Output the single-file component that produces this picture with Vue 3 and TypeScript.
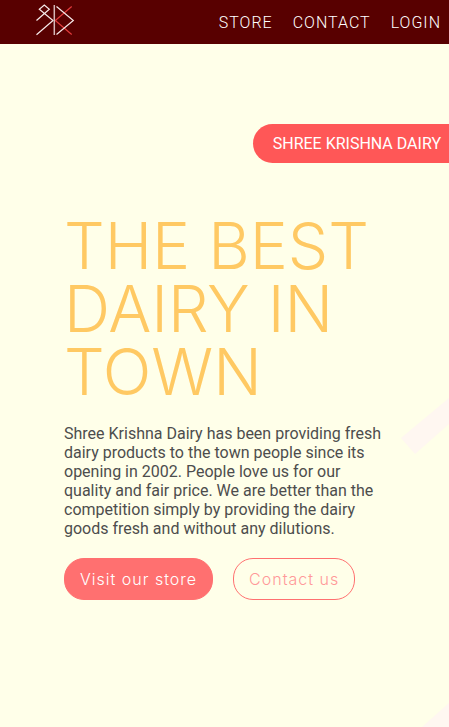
<script setup lang="ts">
interface NavLink {
  label: string
  href: string
}

const links: NavLink[] = [
  { label: 'STORE', href: '#store' },
  { label: 'CONTACT', href: '#contact' },
  { label: 'LOGIN', href: '#login' },
]
</script>

<template>
  <div class="page">
    <header class="bar">
      <a class="logo" href="#home" aria-label="Home">
        <svg viewBox="0 0 40 44" width="40" height="44" fill="none" stroke-width="1.2">
          <path
            d="M1.500 20.500 14.300 9.300 9.300 5 4.300 9.300 18 20.500 1.500 34.800"
            stroke="#f6eaea"
          />
          <path d="M36.700 6.500 20.300 20.500 36.700 34.500" stroke="#e23a3a" />
          <path d="M21.500 6.500 38.300 20.500 21.500 34.500" stroke="#f6eaea" />
          <path d="M19.300 5V35" stroke="#d5b8b8" stroke-width="1.500" />
        </svg>
      </a>
      <nav class="nav" aria-label="Main">
        <a v-for="link in links" :key="link.label" :href="link.href">{{ link.label }}</a>
      </nav>
    </header>

    <main class="hero">
      <svg class="watermark" viewBox="0 0 49 329" width="49" height="329" aria-hidden="true">
        <path d="M1 40 49 0V26L15 56ZM22 329 49 305V329Z" fill="#fff7f1" />
      </svg>
      <p class="tag">SHREE KRISHNA DAIRY</p>
      <div class="content">
        <h1>THE BEST DAIRY IN TOWN</h1>
        <p class="intro">
          Shree Krishna Dairy has been providing fresh dairy products to the town people since its
          opening in 2002. People love us for our quality and fair price. We are better than the
          competition simply by providing the dairy goods fresh and without any dilutions.
        </p>
        <div class="actions">
          <button type="button" class="btn filled">Visit our store</button>
          <button type="button" class="btn outlined">Contact us</button>
        </div>
      </div>
    </main>
  </div>
</template>

<style>
body {
  background: #ffffe9;
}
</style>

<style scoped>
.page {
  display: flex;
  flex-direction: column;
  min-height: 100vh;
  font-family: Roboto, sans-serif;
  font-size: 16px;
  background: #ffffe9;
}

.bar {
  display: flex;
  align-items: center;
  justify-content: space-between;
  height: 44px;
  padding: 0 8px 0 35px;
  background: #580000;
}

.logo,
.logo svg {
  display: block;
}

.nav {
  display: flex;
  gap: 20px;
}

.nav a {
  color: #fff;
  font-weight: 300;
  letter-spacing: 1px;
  text-decoration: none;
}

.hero {
  position: relative;
  display: flex;
  flex: 1;
  flex-direction: column;
  padding-top: 80px;
  overflow: hidden;
}

.watermark {
  position: absolute;
  right: 0;
  bottom: 0;
}

.tag {
  align-self: flex-end;
  margin: 0;
  padding: 10px 8px 10px 20px;
  border-radius: 20px 0 0 20px;
  color: #fff;
  line-height: 19px;
  background: #ff5757;
}

.content {
  position: relative;
  padding: 51px 64px 0;
}

h1 {
  margin: 0;
  color: #ffc963;
  font-family: Inter, sans-serif;
  font-size: 64px;
  font-weight: 300;
  line-height: 63px;
}

.intro {
  margin: 21px 0 20px;
  color: #4d4d4d;
  line-height: 19px;
}

.actions {
  display: flex;
  gap: 20px;
}

.btn {
  height: 42px;
  padding: 0 15px;
  border: 1px solid #ff7070;
  border-radius: 20px;
  font-family: Inter, sans-serif;
  font-size: 16px;
  font-weight: 300;
  letter-spacing: 1px;
  white-space: nowrap;
}

.filled {
  color: #fff;
  background: #ff7070;
}

.outlined {
  color: #ff9999;
  background: transparent;
}
</style>
